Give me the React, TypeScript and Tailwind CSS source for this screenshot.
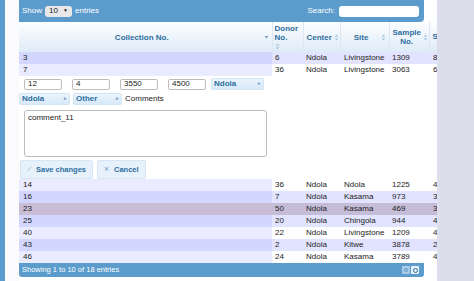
import type { ReactNode } from 'react'

type Row = { id: string; donor: string; center: string; site: string; sample: string; next: string; tone: 'odd' | 'even' | 'hl' }

const TOP_ROWS: Row[] = [
  { id: '3', donor: '6', center: 'Ndola', site: 'Livingstone', sample: '1309', next: '8', tone: 'odd' },
  { id: '7', donor: '36', center: 'Ndola', site: 'Livingstone', sample: '3063', next: '6', tone: 'even' },
]

const BOTTOM_ROWS: Row[] = [
  { id: '14', donor: '36', center: 'Ndola', site: 'Ndola', sample: '1225', next: '4', tone: 'even' },
  { id: '16', donor: '7', center: 'Ndola', site: 'Kasama', sample: '973', next: '3', tone: 'odd' },
  { id: '23', donor: '50', center: 'Ndola', site: 'Kasama', sample: '469', next: '3', tone: 'hl' },
  { id: '25', donor: '20', center: 'Ndola', site: 'Chingola', sample: '944', next: '4', tone: 'odd' },
  { id: '40', donor: '22', center: 'Ndola', site: 'Livingstone', sample: '1209', next: '4', tone: 'even' },
  { id: '43', donor: '2', center: 'Ndola', site: 'Kitwe', sample: '3878', next: '2', tone: 'odd' },
  { id: '46', donor: '24', center: 'Ndola', site: 'Kasama', sample: '3789', next: '4', tone: 'even' },
]

const TONES = {
  odd: { first: 'bg-[#d3d6ff]', rest: 'bg-[#e2e4ff]' },
  even: { first: 'bg-[#eaebff]', rest: 'bg-white' },
  hl: { first: 'bg-[#c9bdd6]', rest: 'bg-[#c6bcd8]' },
}

function SortIcon() {
  return (
    <svg width="5" height="7" viewBox="0 0 5 7" className="shrink-0">
      <path d="M2.5 0.5 L4.5 2.8 L0.5 2.8 Z" fill="#a9c8e0" />
      <path d="M2.5 6.5 L4.5 4.2 L0.5 4.2 Z" fill="#a9c8e0" />
    </svg>
  )
}

function SortDesc() {
  return (
    <svg width="5" height="4" viewBox="0 0 5 4" className="shrink-0">
      <path d="M0.5 1 L4.5 1 L2.5 3.5 Z" fill="#7b9fc0" />
    </svg>
  )
}

function Th({ children, w, icon }: { children: ReactNode; w: string; icon?: ReactNode }) {
  return (
    <th className={`${w} border-r border-[#dbe7f2] px-[3px] align-middle font-bold text-[#2e6e9e]`}>
      <div className="flex items-center justify-between gap-[2px] leading-[9px]">
        <span className="flex-1 text-center">{children}</span>
        {icon ?? <SortIcon />}
      </div>
    </th>
  )
}

function DataRow({ r }: { r: Row }) {
  const t = TONES[r.tone]
  return (
    <tr className="h-[12px] text-[#222]">
      <td className={`${t.first} pl-[4px]`}>{r.id}</td>
      <td className={`${t.rest} pl-[3px]`}>{r.donor}</td>
      <td className={`${t.rest} pl-[3px]`}>{r.center}</td>
      <td className={`${t.rest} pl-[4px]`}>{r.site}</td>
      <td className={`${t.rest} pl-[3px]`}>{r.sample}</td>
      <td className={`${t.rest} pl-[4px]`}>{r.next}</td>
    </tr>
  )
}

function UiSelect({ label, w }: { label: string; w: string }) {
  return (
    <div className={`${w} flex h-[12px] items-center justify-between rounded-[2px] border border-[#d3e4f3] bg-gradient-to-b from-[#eaf4fd] to-[#d8e9f8] px-[2px] font-bold text-[#2e6e9e]`}>
      <span>{label}</span>
      <span className="text-[5px] text-[#6f9cc4]">▸</span>
    </div>
  )
}

function TextInput({ value }: { value: string }) {
  return (
    <div className="flex h-[11px] w-[38px] items-center rounded-[2px] border border-[#bdbdbd] bg-white px-[3px] text-[#222]">
      {value}
    </div>
  )
}

export default function App() {
  return (
    <div className="flex h-[281px] w-[474px] overflow-hidden bg-white text-[8px]" style={{ fontFamily: '"Liberation Sans", Arial, sans-serif' }}>
      <div className="w-[5px] bg-[#5b9bd0]" />
      <div className="w-[14px] bg-[#fbfbfd]" />

      <div className="flex w-[418px] flex-col overflow-hidden">
        {/* Top bar */}
        <div className="flex h-[22px] w-[405px] shrink-0 items-center justify-between rounded-br-[4px] bg-[#5c9ccc] pl-[3px] pr-[5px] text-white">
          <div className="flex items-center gap-[3px]">
            <span>Show</span>
            <div className="flex h-[11px] w-[27px] items-center justify-between rounded-[3px] bg-[#e8e8e8] px-[4px] text-[#222]">
              <span>10</span>
              <span className="text-[5px]">▼</span>
            </div>
            <span>entries</span>
          </div>
          <div className="flex items-center gap-[4px]">
            <span>Search:</span>
            <div className="h-[11px] w-[80px] rounded-[3px] bg-white" />
          </div>
        </div>

        {/* Table */}
        <table className="w-[470px] shrink-0 table-fixed border-collapse">
          <thead>
            <tr className="h-[30px] bg-gradient-to-b from-[#fdfeff] to-[#deebf7]">
              <Th w="w-[253px]" icon={<SortDesc />}>Collection No.</Th>
              <th className="w-[31px] border-r border-[#dbe7f2] px-[2px] text-left align-middle font-bold leading-[9px] text-[#2e6e9e]">
                <div>Donor</div>
                <div>No.</div>
                <div className="pt-[1px]"><SortIcon /></div>
              </th>
              <Th w="w-[37px]">Center</Th>
              <Th w="w-[49px]">Site</Th>
              <Th w="w-[40px]">Sample<br />No.</Th>
              <th className="w-[60px] px-[3px] text-left font-bold text-[#2e6e9e]">S</th>
            </tr>
          </thead>
          <tbody>
            {TOP_ROWS.map((r) => <DataRow key={r.id} r={r} />)}
            <tr className="h-[102px] bg-white">
              <td colSpan={6} className="align-top">
                <div className="flex flex-col pt-[2px]">
                  <div className="flex items-center pl-[5px]">
                    <div className="flex gap-[10px]">
                      <TextInput value="12" />
                      <TextInput value="4" />
                      <TextInput value="3550" />
                      <TextInput value="4500" />
                    </div>
                    <div className="ml-[5px]"><UiSelect label="Ndola" w="w-[53px]" /></div>
                  </div>
                  <div className="mt-[3px] flex items-center gap-[3px]">
                    <UiSelect label="Ndola" w="w-[51px]" />
                    <UiSelect label="Other" w="w-[49px]" />
                    <span className="text-[#222]">Comments</span>
                  </div>
                  <div className="ml-[5px] mt-[5px] h-[47px] w-[243px] rounded-[3px] border border-[#bdbdbd] px-[3px] pt-[1px] text-[#222]">
                    comment_11
                  </div>
                  <div className="mt-[3px] flex gap-[4px] pl-[1px] text-[7.5px]">
                    <div className="flex h-[19px] w-[73px] items-center gap-[5px] rounded-[2px] border border-[#d6e6f4] bg-[#e6f1fb] pl-[6px] font-bold text-[#2e6e9e]">
                      <span className="text-[6px] text-[#9ab8d3]">⟋</span>
                      <span>Save changes</span>
                    </div>
                    <div className="flex h-[19px] w-[49px] items-center gap-[5px] rounded-[2px] border border-[#d6e6f4] bg-[#e6f1fb] pl-[6px] font-bold text-[#2e6e9e]">
                      <span className="text-[6px] text-[#7fa7cc]">✕</span>
                      <span>Cancel</span>
                    </div>
                  </div>
                </div>
              </td>
            </tr>
            {BOTTOM_ROWS.map((r) => <DataRow key={r.id} r={r} />)}
          </tbody>
        </table>

        {/* Footer */}
        <div className="flex h-[14px] w-[405px] shrink-0 items-center justify-between rounded-b-[3px] bg-[#5c9ccc] pl-[3px] pr-[5px] text-[7.5px] text-white">
          <span>Showing 1 to 10 of 18 entries</span>
          <div className="flex gap-[1px]">
            <div className="flex h-[8px] w-[8px] items-center justify-center rounded-[1px] bg-[#a9cbe6]">
              <div className="h-[4px] w-[4px] rounded-full border border-[#5c9ccc]" />
            </div>
            <div className="flex h-[8px] w-[8px] items-center justify-center rounded-[1px] bg-[#e8f2fb]">
              <div className="h-[5px] w-[5px] rounded-full border-[1.5px] border-[#2e6e9e]" />
            </div>
          </div>
        </div>
      </div>

      <div className="flex-1 bg-[#dcdfeb]" />
    </div>
  )
}
